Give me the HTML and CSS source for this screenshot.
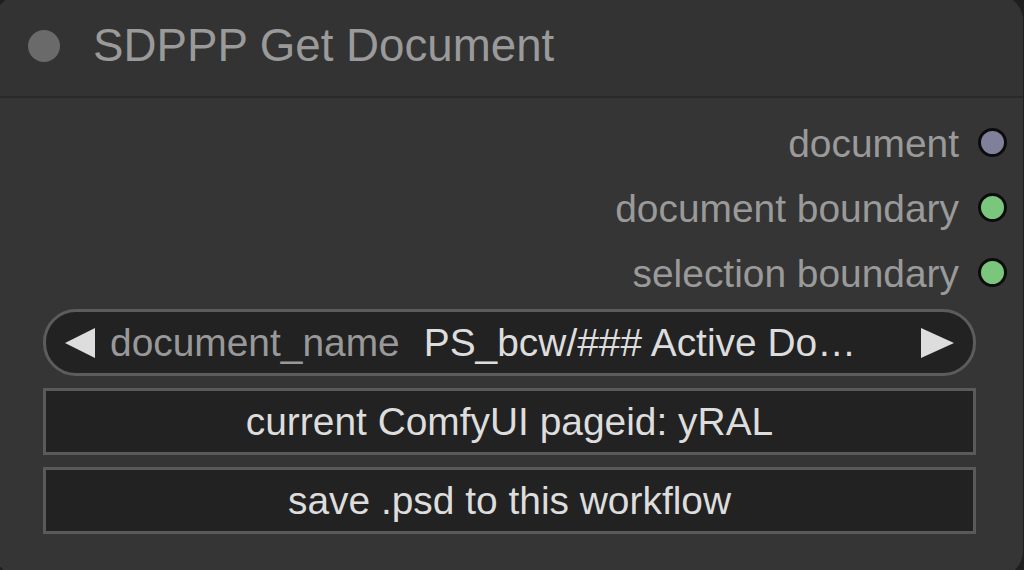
FILE: index.html
```html
<!DOCTYPE html>
<html>
<head>
<meta charset="utf-8">
<link rel="stylesheet" href="styles.css">
</head>
<body>
<div class="node">
  <div class="title">
    <span class="title-dot"></span>
    <span class="title-text">SDPPP Get Document</span>
  </div>
  <div class="body">
    <div class="slots">
      <div class="slot"><span class="slot-label">document</span><span class="slot-dot dot-doc"></span></div>
      <div class="slot"><span class="slot-label">document boundary</span><span class="slot-dot dot-green"></span></div>
      <div class="slot"><span class="slot-label">selection boundary</span><span class="slot-dot dot-green"></span></div>
    </div>
    <div class="widgets">
      <div class="combo">
        <span class="arrow arrow-left"></span>
        <span class="combo-label">document_name</span>
        <span class="combo-value">PS_bcw/### Active Do…</span>
        <span class="arrow arrow-right"></span>
      </div>
      <div class="button">current ComfyUI pageid: yRAL</div>
      <div class="button">save .psd to this workflow</div>
    </div>
  </div>
</div>
</body>
</html>
```

FILE: styles.css
```css
html, body {
  margin: 0;
  padding: 0;
  width: 1024px;
  height: 570px;
  overflow: hidden;
  background: #1f1f1f;
  font-family: "Liberation Sans", Arial, sans-serif;
}

.node {
  margin: -5px 0 0 -5px;
  width: 1028px;
  height: 582px;
  border-radius: 26px;
  background: #353535;
  overflow: hidden;
  display: flex;
  flex-direction: column;
}

.title {
  height: 101px;
  flex: none;
  background: #333333;
  border-bottom: 2px solid #2a2a2a;
  display: flex;
  align-items: center;
}

.title-dot {
  width: 32px;
  height: 32px;
  border-radius: 50%;
  background: #6a6a6a;
  margin-left: 33px;
  flex: none;
}

.title-text {
  margin-left: 33px;
  font-size: 45.7px;
  color: #9a9a9a;
  white-space: nowrap;
}

.body {
  padding-top: 12px;
}

.slot {
  height: 65px;
  display: flex;
  align-items: center;
  justify-content: flex-end;
  padding-right: 16px;
}

.slot-label {
  font-size: 38.9px;
  color: #9a9a9a;
  white-space: nowrap;
  margin-right: 19px;
  position: relative;
  top: 1px;
}

.slot-dot {
  width: 23px;
  height: 23px;
  border-radius: 50%;
  border: 3px solid #0c0c0c;
  flex: none;
}

.dot-doc { background: #80809a; }
.dot-green { background: #7ac67c; }

.widgets {
  margin: 4px 47px 0 48px;
  display: flex;
  flex-direction: column;
  gap: 12px;
}

.combo {
  height: 61px;
  border: 3px solid #5c5c5c;
  border-radius: 33px;
  background: #222222;
  display: flex;
  align-items: center;
  padding: 0 19px 0 19px;
  font-size: 38.9px;
  white-space: nowrap;
}

.arrow {
  width: 0;
  height: 0;
  border-top: 15.5px solid transparent;
  border-bottom: 15.5px solid transparent;
  flex: none;
}

.arrow-left {
  border-right: 30px solid #dddddd;
}

.arrow-right {
  border-left: 33px solid #dddddd;
  margin-left: auto;
}

.combo-label {
  color: #999999;
  margin-left: 15px;
}

.combo-value {
  color: #dddddd;
  margin-left: 24px;
}

.button {
  height: 61px;
  border: 3px solid #5a5a5a;
  background: #222222;
  display: flex;
  align-items: center;
  justify-content: center;
  font-size: 38.9px;
  color: #dddddd;
  white-space: nowrap;
}
```
